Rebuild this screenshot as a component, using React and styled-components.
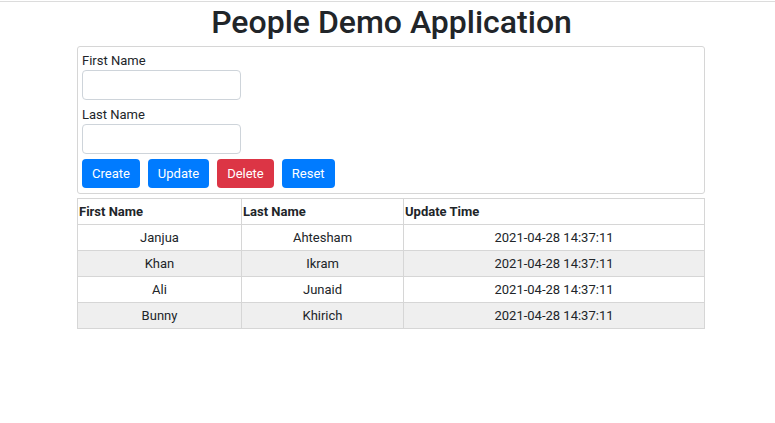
import React, { useState } from 'react';
import styled, { createGlobalStyle } from 'styled-components';

const GlobalStyle = createGlobalStyle`
  body {
    margin: 0;
    background: #fff;
    color: #212529;
    font-family: Roboto, "Liberation Sans", Arial, sans-serif;
    font-size: 13px;
  }
`;

const Page = styled.div`
  padding-top: 1px;
`;

const TopRule = styled.div`
  height: 1px;
  background: #dcdcdc;
`;

const Title = styled.h1`
  margin: 0;
  height: 44px;
  font-size: 32px;
  font-weight: 500;
  line-height: 40px;
  text-align: center;
  padding-left: 8px;
  color: #212529;
`;

const Container = styled.div`
  width: 628px;
  margin: 0 0 0 77px;
`;

const FormBox = styled.div`
  border: 1px solid #d6d6d6;
  border-radius: 3px;
  padding: 5px 4px 5px 4px;
`;

const Label = styled.label`
  display: block;
  line-height: 17px;
  margin: ${(p) => (p.$first ? '0' : '6px')} 0 1px;
`;

const Input = styled.input`
  display: block;
  box-sizing: border-box;
  width: 159px;
  height: 30px;
  border: 1px solid #ced4da;
  border-radius: 4px;
  padding: 4px 8px;
  font: inherit;
  outline: none;
`;

const ButtonRow = styled.div`
  display: flex;
  gap: 8px;
  margin-top: 5px;
`;

const Button = styled.button`
  height: 29px;
  padding: 0 10px;
  border: none;
  border-radius: 4px;
  background: ${(p) => (p.$danger ? '#dc3545' : '#007bff')};
  color: #fff;
  font-family: Roboto, "Liberation Sans", Arial, sans-serif;
  font-size: 13px;
  font-weight: 400;
  cursor: pointer;
`;

const Table = styled.table`
  width: 628px;
  margin-top: 4px;
  border-collapse: collapse;
  table-layout: fixed;
`;

const HeadCell = styled.th`
  height: 25px;
  padding: 0 1px;
  border: 1px solid #d6d6d6;
  text-align: left;
  font-weight: 700;
`;

const Row = styled.tr`
  background: ${(p) => (p.$striped ? '#efefef' : '#fff')};
`;

const Cell = styled.td`
  height: 25px;
  padding: 0 1px;
  border: 1px solid #d6d6d6;
  text-align: center;
`;

const people = [
  { first: 'Janjua', last: 'Ahtesham', time: '2021-04-28 14:37:11' },
  { first: 'Khan', last: 'Ikram', time: '2021-04-28 14:37:11' },
  { first: 'Ali', last: 'Junaid', time: '2021-04-28 14:37:11' },
  { first: 'Bunny', last: 'Khirich', time: '2021-04-28 14:37:11' },
];

const App = () => {
  const [firstName, setFirstName] = useState('');
  const [lastName, setLastName] = useState('');

  return (
    <Page>
      <GlobalStyle />
      <TopRule />
      <Title>People Demo Application</Title>
      <Container>
        <FormBox>
          <Label $first>First Name</Label>
          <Input value={firstName} onChange={(e) => setFirstName(e.target.value)} />
          <Label>Last Name</Label>
          <Input value={lastName} onChange={(e) => setLastName(e.target.value)} />
          <ButtonRow>
            <Button>Create</Button>
            <Button>Update</Button>
            <Button $danger>Delete</Button>
            <Button>Reset</Button>
          </ButtonRow>
        </FormBox>

        <Table>
          <colgroup>
            <col style={{ width: 164 }} />
            <col style={{ width: 162 }} />
            <col />
          </colgroup>
          <thead>
            <tr>
              <HeadCell>First Name</HeadCell>
              <HeadCell>Last Name</HeadCell>
              <HeadCell>Update Time</HeadCell>
            </tr>
          </thead>
          <tbody>
            {people.map((p, i) => (
              <Row key={p.first} $striped={i % 2 === 1}>
                <Cell>{p.first}</Cell>
                <Cell>{p.last}</Cell>
                <Cell>{p.time}</Cell>
              </Row>
            ))}
          </tbody>
        </Table>
      </Container>
    </Page>
  );
};

export default App;
